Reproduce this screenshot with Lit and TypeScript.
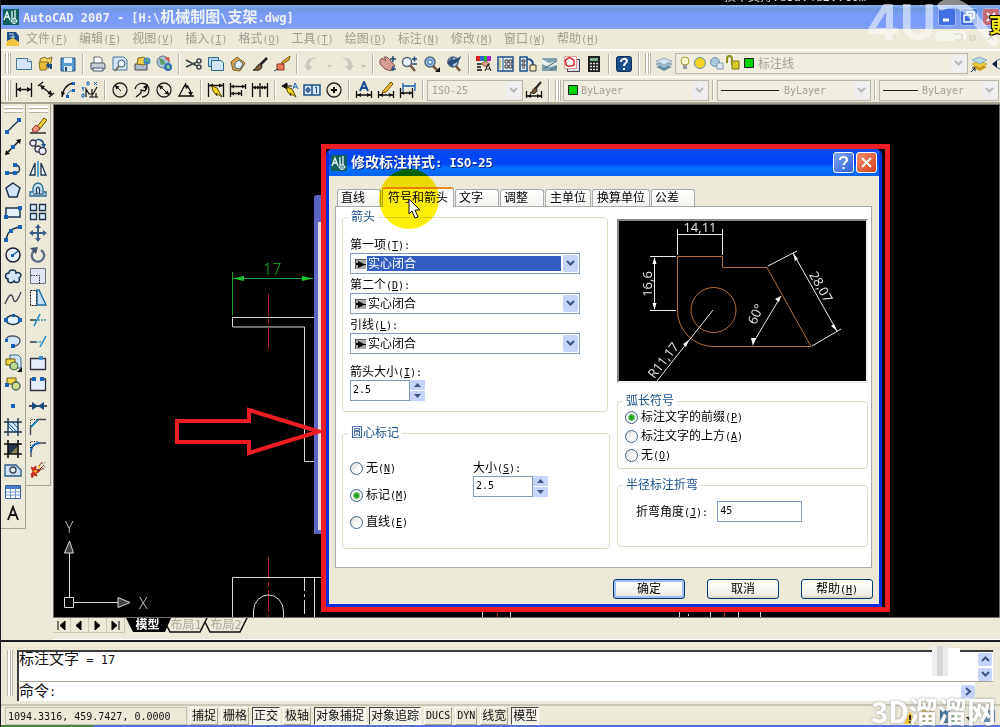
import { LitElement, html, svg, css, nothing } from "lit";
import { customElement } from "lit/decorators.js";
import { classMap } from "lit/directives/class-map.js";

const N = "#1c3550";
const B = "#1a63b4";
const P = "#d3e4f6";

/* Toolbar glyphs, drawn on an 18 x 18 grid. */
const glyphs: Record<string, unknown> = {
  new: svg`<path d="M1.500 3.500h11l4 3v8h-15z" fill=${P} stroke="#4a7899"/><path d="M12.500 3.500v3h4" fill="#fff" stroke="#4a7899"/>`,
  open: svg`<path d="M3 4l5-2 2 2 5-2-2 10-9 3z" fill="#f3d35c" stroke="#7a6a20"/><path d="M2 7h9l-2 8H3z" fill="#e6b93a" stroke="#8a7420"/><path d="M9 10l3-3v2h3v5h-2v-2h-1v2z" fill="#1d4f86"/>`,
  save: svg`<path d="M2 3h14v13H2z" fill="#5b97cf" stroke="#27557f"/><path d="M5 3h8v5H5z" fill="#eaf3fb"/><path d="M5 11h8v5H5z" fill="#dfe6ec"/><path d="M6 12h2v4H6z" fill="#27557f"/>`,
  print: svg`<path d="M5 8V2h6l2 2v4" fill="#fff" stroke="#667"/><path d="M2 8h13l1 2v4H2z" fill="#c4ccd6" stroke="#4b5a6b"/><path d="M4 13h10v3H4z" fill="#eef" stroke="#4b5a6b"/>`,
  preview: svg`<path d="M2 2h11l3 3v10H2z" fill=${P} stroke="#4a7899"/><circle cx="10.5" cy="8.500" r="3.5" fill="#e9f6ff" stroke="#456"/><path d="M8 11l-4 5" stroke="#765" stroke-width="2"/>`,
  publish: svg`<path d="M2 9h12v6H2z" fill="#aebccb" stroke="#445"/><path d="M4 9l1-6 6-1 3 5-3 3z" fill="#f0cb4a" stroke="#866a1c"/><circle cx="14" cy="6" r="3.5" fill="#3f8cc5"/><path d="M12 5l3-1 1 3z" fill="#7cb44c"/>`,
  web: svg`<circle cx="8" cy="7" r="6" fill="#a9c4da" stroke="#678"/><path d="M4 3l5 2 1 4-4 1z" fill="#5fa06a"/><circle cx="13" cy="12" r="4" fill="#3473b8"/><path d="M9 3l5-1 1 5z" fill="#d65b4c"/><path d="M11 11l3-1 1 3-2 1z" fill="#9bd08c"/>`,
  cut: svg`<path d="M1 5l11 6M1 12l11-5" stroke="#3c4650" stroke-width="1.500"/><circle cx="14" cy="6" r="2" fill="none" stroke="#3c4650" stroke-width="1.500"/><circle cx="14" cy="12" r="2" fill="none" stroke="#3c4650" stroke-width="1.500"/>`,
  copy: svg`<path d="M1.500 2.500h10v9h-10z" fill="#b9d6ef" stroke="#2c6a92"/><path d="M4.500 5.500h9l3 2v8h-12z" fill=${P} stroke="#2c6a92"/>`,
  paste: svg`<path d="M2 7l6-5 8 6-5 8-7-1z" fill="#d7a552" stroke="#7a5a22"/><path d="M6 8l4-3 4 4-3 5-5-1z" fill="#e4eef7" stroke="#467"/>`,
  brush: svg`<path d="M16 3l-7 7" stroke="#222" stroke-width="2.500"/><path d="M10 9c-5 0-4 5-8 6 5 1 9 0 9-4z" fill="#7b5a3c" stroke="#222"/>`,
  matchp: svg`<path d="M17 1l-8 6-1 3 8-5z" fill="#e9b52a" stroke="#75560b"/><path d="M4 9h7v6H4z" fill="#e8795a" stroke="#8f3117"/><path d="M1 16l4-2" stroke="#246"/>`,
  undo: svg`<path d="M3 10c0-6 5-8 11-7-6 1-8 4-7 8l3 0-5 5-4-6z" fill="#c9c9c0"/>`,
  redo: svg`<path d="M15 10c0-6-5-8-11-7 6 1 8 4 7 8l-3 0 5 5 4-6z" fill="#c9c9c0"/>`,
  pan: svg`<path d="M1 5l2-2 4 3-2-4 3 0 4 4 4 5-4 5-6-2-5-5z" fill="#d59c92" stroke="#7c5750"/><path d="M14 1v6M11 4h6M14 11v5M12 14h5" stroke="#1e4d7a" stroke-width="1.500"/>`,
  zoompm: svg`<circle cx="6" cy="7" r="4.500" fill="#eef7ff" stroke="#567" stroke-width="1.500"/><path d="M9 10l5 6" stroke="#754" stroke-width="2.500"/><path d="M11 4h5M13.500 1.500v5M11 9h5" stroke="#1e4d7a" stroke-width="1.500"/>`,
  zoomw: svg`<circle cx="7" cy="7" r="5" fill="#9fc8ea" stroke="#567" stroke-width="1.500"/><path d="M5 5h4v4H5z" fill="#fff" stroke=${B}/><path d="M10 11l4 4" stroke="#754" stroke-width="2.500"/><path d="M17 12v5h-5z"/>`,
  zoomp: svg`<circle cx="8" cy="7" r="5" fill="#a8cdee" stroke="#567" stroke-width="1.500"/><path d="M11 11l4 5" stroke="#754" stroke-width="2.500"/><path d="M2 8l6-6v3c4-1 6-3 8-4-1 5-4 7-8 8v3z" fill="#2a4c76"/>`,
  props: svg`<path d="M1 1h4v5H1z" fill="#d22"/><path d="M5 1h4v5H5z" fill="#36c"/><path d="M9 1h3v5H9z" fill="#2b2"/><path d="M12 1h4v5h-4z" fill="#a2c"/><path d="M2 9h5M2 12h4M2 15h5" stroke="#444" stroke-width="2"/><path d="M6 9l5-3 4 3-3 3z" fill="#dba58f" stroke="#754"/><path d="M10 16l3-7 3 7M11 14h4" stroke="#222" fill="none"/>`,
  dc: svg`<path d="M1 2h15v14H1z" fill="#e9f2fb" stroke="#1d4f86" stroke-width="1.500"/><path d="M6 2v14" stroke="#1d4f86"/><path d="M3 4v10" stroke="#cc8" stroke-width="2"/><path d="M8 5h3v3H8zM12 5h3v3h-3zM8 10h3v3H8zM12 10h3v3h-3z" fill="none" stroke="#333"/>`,
  tp: svg`<path d="M1 2h7v14H1z" fill="#dbe9f7" stroke="#1d4f86" stroke-width="1.500"/><path d="M3 5h3v2H3zM3 9h3v2H3zM3 13h3" stroke="#333" fill="none"/><path d="M8 4c4 0 6 2 6 6" fill="none" stroke="#1d4f86" stroke-width="2"/><path d="M11 10h6v6h-6z" fill="#f4e8bc" stroke="#333"/>`,
  sheet: svg`<path d="M1 3h15v13H1z" fill="#7fa0ae"/><path d="M1 4l7 4 8-2v4l-8 2-7-3z" fill="#e8efef"/><path d="M4 13l12-7M9 15l7-3" stroke="#466"/>`,
  markup: svg`<path d="M4.500 4.500h12v12h-12z" fill="#dde" stroke="#445"/><path d="M1.500 1.500h12v12h-12z" fill="#fff" stroke="#d99"/><path d="M4 4c3-3 4 0 5 0 3 1 2 2 2 4 1 3-2 3-4 3-2 1-5-1-4-3-1-2-1-3 1-4z" fill="none" stroke="#d22" stroke-width="1.500"/>`,
  calc: svg`<path d="M3 1h12v16H3z" fill="#222"/><path d="M5 3h8v3H5z" fill="#7fb58b"/><path d="M5 8.500h8M5 11.500h8M5 14.500h8" stroke="#ddd" stroke-width="1.500" stroke-dasharray="2 1"/>`,
  help: svg`<rect x="1.500" y="1.500" width="15" height="15" rx="2" fill="#17508c" stroke="#0c2f57"/><path d="M6 7c0-4 6-4 6-1 0 2-3 2-3 5M9 13v2" fill="none" stroke="#fff" stroke-width="2"/>`,
  layers: svg`<path d="M1 12l8 4 8-4-8-3z" fill="#6c8ca6"/><path d="M1 9l8 4 8-4-8-3z" fill="#9fbdd2" stroke="#5b7c93" stroke-width=".5"/><path d="M1 6l8 4 8-4-8-3z" fill="#cfe2ee" stroke="#5b7c93" stroke-width=".5"/>`,
  layerp: svg`<path d="M2 12l8 4 7-4-8-3z" fill="#c99b17"/><path d="M2 9l8 4 7-4-8-3z" fill="#f1cf3c" stroke="#8c7414" stroke-width=".5"/><path d="M2 5l8 4 7-4-8-3z" fill="#b9d8ea" stroke="#4b7c93" stroke-width=".5"/><path d="M1 17l4-4M2 13h3v3" stroke="#124" fill="none"/>`,
  linear: svg`<path d="M1.500 2v14M16.500 2v14M2 8.500h14" stroke="#111" stroke-width="1.300"/><path d="M2 8.500l4-2.500v5zM16 8.500l-4-2.500v5z"/>`,
  aligned: svg`<path d="M4 5l11 9M1 5l5-4M12 16l5-4" stroke="#111" stroke-width="1.300"/><path d="M3 4l5 1-3 4zM15.500 14l-5-1 3-4z"/>`,
  arclen: svg`<path d="M3 16C4 8 8 3 15 2" fill="none" stroke="#111" stroke-width="1.300"/><path d="M8 16c0-4 2-6 7-7" fill="none" stroke=${B}/><path d="M3 16l-1-6 4 2z"/><path d="M13 1h3v3h-3zM13 8h3v3h-3zM7 14h3v3H7z" fill=${B}/>`,
  ordinate: svg`<path d="M5 16V8l3 5h4l4-7M8 16h9M15 16v-4M11 16V8" fill="none" stroke="#111" stroke-width="1.200"/><path d="M1 6l1 2 1-2M2 8v2M1 13h2v3H1zM6 1h2v3H6zM13 1l3 3M16 1l-3 3" fill="none" stroke=${B}/>`,
  radius: svg`<circle cx="9" cy="9" r="7" fill="none" stroke="#222" stroke-width="1.300"/><path d="M10 10L5 5" stroke="#111"/><path d="M3.500 4l5 1.500-3 3z"/>`,
  jogged: svg`<path d="M2 8C4 0 17 1 16 9c0 4-3 7-7 7" fill="none" stroke="#222" stroke-width="1.300"/><path d="M3 16l5-4 0-3 4 1 2-5" fill="none" stroke="#111" stroke-width="1.300"/><path d="M15 3l-1 6-4-3z"/>`,
  diameter: svg`<circle cx="9" cy="9" r="7" fill="none" stroke="#222" stroke-width="1.300"/><path d="M5 5l8 8" stroke="#111"/><path d="M3.500 4l5 1.500-3 3zM14.500 14l-5-1.500 3-3z"/>`,
  angular: svg`<path d="M9 2L2 15h15" fill="none" stroke="#111" stroke-width="1.300"/><path d="M8 5c4 1 6 4 6 9" fill="none" stroke="#111" stroke-width="1.300"/><path d="M8 3l4 2-3 3zM14 15l-3-4h5z"/>`,
  qdim: svg`<path d="M1.500 2v14M16.500 2v14M2 4.500h14" stroke="#111" stroke-width="1.300"/><path d="M2 4.500l4-2v4zM16 4.500l-4-2v4z"/><path d="M5 5l5 2 5 9-6-4 1 3-4-5z" fill="#f0d31c" stroke="#5a4c00"/>`,
  baseline: svg`<path d="M1.500 2v14M16.500 3v5M12.500 9v6M2 5.500h14M2 12.500h10" stroke="#111" stroke-width="1.300"/><path d="M2 5.500l3-2v4zM16 5.500l-3-2v4zM2 12.500l3-2v4zM12 12.500l-3-2v4z"/>`,
  continue: svg`<path d="M1.500 2v14M9 2v14M16.500 2v14M2 6.500h14" stroke="#111" stroke-width="1.300"/><path d="M2 6.500l3-2v4zM9 6.500l-3-2v4zM9 6.500l3-2v4zM16 6.500l-3-2v4z"/>`,
  leader: svg`<path d="M1 5l5-3v6zM5 5h6" stroke="#111"/><path d="M6 6l5 2 4 8-6-4 1 3-4-5z" fill="#f0d31c" stroke="#5a4c00"/><path d="M12 8l2-6 3 6M13 6h3" fill="none" stroke=${B}/>`,
  tol: svg`<path d="M1 4h16v10H1zM9 4v10" fill="#d8e8f8" stroke="#1d4f86" stroke-width="1.500"/><circle cx="5" cy="9" r="2" fill="none" stroke="#1d4f86"/><path d="M2.500 9h5M5 6v6M12 7l1.500-1v6" fill="none" stroke="#1d4f86"/>`,
  center: svg`<circle cx="9" cy="9" r="7" fill="none" stroke="#222" stroke-width="1.300"/><path d="M9 6v6M6 9h6" stroke="#111" stroke-width="2"/>`,
  dimedit: svg`<path d="M5 10l4-9 4 9M6 7h6" fill="none" stroke="#1a4f90" stroke-width="2"/><path d="M1.500 10v7M16.500 10v7M2 14h14" stroke="#111" stroke-width="1.300"/><path d="M2 14l4-2v4zM16 14l-4-2v4z"/>`,
  dimtedit: svg`<path d="M6 10l8-9 2 2-7 8-4 1z" fill="#f0c22c" stroke="#76500b"/><path d="M1.500 10v7M16.500 10v7M2 14h14" stroke="#111" stroke-width="1.300"/><path d="M2 14l4-2v4zM16 14l-4-2v4z"/>`,
  dimupd: svg`<path d="M4 2v8M16 2v8M4 5h12" stroke="#1a63b4" stroke-width="1.300"/><path d="M1.500 7v10M13.500 7v10M2 12h12" stroke="#111" stroke-width="1.300"/><path d="M2 12l3-2v4zM13 12l-3-2v4z"/>`,
  dimstyle: svg`<path d="M16 1l-6 7" stroke="#222" stroke-width="2"/><path d="M11 7c-4 0-3 4-6 5 4 1 7 0 7-3z" fill="#7b5a3c" stroke="#222"/><path d="M1.500 10v7M16.500 10v7M2 15h14" stroke="#111" stroke-width="1.300"/><path d="M2 15l4-2v4zM16 15l-4-2v4z"/>`,
  line: svg`<path d="M3 15L15 3" stroke=${N} stroke-width="1.400"/><path d="M1 13h4v4H1zM13 1h4v4h-4z" fill=${B}/>`,
  xline: svg`<path d="M2 16L16 2" stroke="#111" stroke-width="1.400"/><path d="M1 17l1-5 4 4zM17 1l-5 1 4 4z"/><path d="M7 7h4v4H7z" fill=${B}/>`,
  pline: svg`<path d="M3 13h8c6 0 6-8 0-8" fill="none" stroke=${N} stroke-width="1.400"/><path d="M1 11h4v4H1zM9 11h4v4H9zM9 3h4v4H9z" fill=${B}/>`,
  polygon: svg`<path d="M9 2l7 5-3 9H5L2 7z" fill=${P} stroke=${N} stroke-width="1.500"/>`,
  rect: svg`<path d="M2 5h14v9H2z" fill="#e6f0fa" stroke=${N} stroke-width="1.500"/><path d="M0 12h4v4H0zM14 3h4v4h-4z" fill=${B}/>`,
  arc: svg`<path d="M2 16C3 9 7 4 16 3" fill="none" stroke=${N} stroke-width="1.400"/><path d="M0 14h4v4H0zM5 5h4v4H5zM14 1h4v4h-4z" fill=${B}/>`,
  circle: svg`<circle cx="9" cy="9" r="7" fill="#e6f0fa" stroke="#223" stroke-width="1.500"/><path d="M9 9l5-4" stroke=${B} stroke-width="1.500"/><path d="M7 8h3v3H7z" fill=${B}/>`,
  cloud: svg`<path d="M5 6c0-4 7-4 7 0 4-2 7 3 3 5 2 4-3 6-5 3-2 3-7 2-6-2-4-1-3-6 1-6z" fill=${P} stroke=${N} stroke-width="1.500"/>`,
  spline: svg`<path d="M1 15C6 3 8 5 9 9s3 7 8-6" fill="none" stroke="#445" stroke-width="1.400"/>`,
  ellipse: svg`<ellipse cx="9" cy="9" rx="7" ry="4.500" fill="#e6f0fa" stroke=${N} stroke-width="1.500"/><path d="M0 7h4v4H0zM14 7h4v4h-4zM8 3h3v3H8z" fill=${B}/>`,
  earc: svg`<path d="M2 8C3 2 16 3 16 9c0 3-3 5-7 5" fill=${P} stroke="#556" stroke-width="1.500"/><path d="M1 7h3v3H1zM7 12h4v4H7z" fill=${B}/>`,
  insblk: svg`<path d="M6 1h8l3 3v10H6z" fill="#d3e4f6" stroke="#3b6b92"/><path d="M2 5h9v6H2z" fill="#f1d64a" stroke="#645609"/><circle cx="10" cy="12" r="4" fill="#bcd68a" stroke="#465"/><path d="M18 13v5h-5z"/>`,
  mkblk: svg`<path d="M3 3h9v6H3z" fill="#f1d64a" stroke="#645609"/><circle cx="12" cy="11" r="4" fill="#cbdc8c" stroke="#465" stroke-width="1.300"/><path d="M1 8h4v4H1z" fill=${B}/>`,
  point: svg`<path d="M7 7h4v4H7z" fill=${B}/>`,
  hatch: svg`<path d="M4 4h10v10H4z" fill=${P}/><path d="M4 8l6 6M4 5l9 9M8 4l6 6M12 4l2 2" stroke=${B}/><path d="M4 0v18M14 0v18M0 4h18M0 14h18" stroke=${N} stroke-width="1.400"/>`,
  grad: svg`<path d="M4 4h10v10H4z" fill="#25384e"/><path d="M6 14l8-8v8z" fill="#8b8554"/><path d="M4 0v18M14 0v18M0 4h18M0 14h18" stroke="#111" stroke-width="1.600"/>`,
  region: svg`<path d="M1 4h11l5 5v6H1z" fill="#cfe0f0" stroke="#2b5c88" stroke-width="1.300"/><circle cx="9" cy="9" r="3" fill="#eee" stroke="#345" stroke-width="1.300"/>`,
  table: svg`<path d="M1.500 2.500h15v13h-15z" fill="#fff" stroke="#345f9c"/><path d="M2 3h14v3H2z" fill="#4d7fc4"/><path d="M2 9h14M2 12h14M6.500 6v9M11.500 6v9" stroke="#6c94cf"/>`,
  mtext: svg`<path d="M4 16L9 3l5 13M6 11h6" fill="none" stroke="#111" stroke-width="1.800"/>`,
  erase: svg`<path d="M1 16h16" stroke="#111" stroke-width="1.300"/><path d="M15 1l3 2-8 10-4 1 1-3z" fill="#f1cf3c" stroke="#6b5108"/><path d="M3 12l4-4 4 3-3 4H4z" fill="#ef8f7d" stroke="#8c3b2c"/>`,
  copyo: svg`<circle cx="4" cy="5" r="3" fill="#eef" stroke="#334" stroke-width="1.300"/><circle cx="9" cy="11" r="3" fill="#eef" stroke="#334" stroke-width="1.300"/><circle cx="13.500" cy="13" r="3.500" fill="#eef" stroke="#334" stroke-width="1.300"/><path d="M6 3c4-3 8-1 9 4" fill="none" stroke="#1d4f86" stroke-width="1.500"/><path d="M12 6h5l-2 4z" fill="#1d4f86"/>`,
  mirror: svg`<path d="M6 3v12H1zM12 3v12h5z" fill="#fff" stroke=${N} stroke-width="1.300"/><path d="M9 1v16" stroke="#1a88c4" stroke-width="1.400"/>`,
  offset: svg`<path d="M1 15v-4h3c-2-12 12-12 10 0h3v4z" fill="#c2ddf1" stroke="#2b6a8e" stroke-width="1.300"/><path d="M4 13h4c-3-9 5-9 2 0h5" fill="none" stroke=${N} stroke-width="1.200"/>`,
  array: svg`<path d="M1.500 1.500h6v6h-6zM10.500 1.500h6v6h-6zM1.500 10.500h6v6h-6zM10.500 10.500h6v6h-6z" fill="#dce9f6" stroke=${N} stroke-width="1.300"/>`,
  move: svg`<path d="M9 3v12M3 9h12" stroke="#3b5f86" stroke-width="2"/><path d="M9 0l3 4H6zM9 18l3-4H6zM0 9l4-3v6zM18 9l-4-3v6z" fill="#3b5f86"/>`,
  rotate: svg`<path d="M12 4c7 5 1 14-6 11-4-2-4-8-1-10" fill="none" stroke="#5c6f86" stroke-width="2.400"/><path d="M1 2l8-1-2 7z" fill="#44566c"/>`,
  scale: svg`<path d="M1.500 1.500h15v15h-15z" fill="#dfe4ee" stroke="#6a7487"/><path d="M2 8.500h8.500v8" fill="none" stroke="#223" stroke-dasharray="1.500 1"/>`,
  stretch: svg`<path d="M8 1h2l7 15H8z" fill="#c8dff1" stroke="#1a6fa4" stroke-width="1.400"/><path d="M1.500 1.500h6v15h-6z" fill="#fff" stroke="#111" stroke-dasharray="2 1"/>`,
  trim: svg`<path d="M1 9h6" stroke="#234" stroke-width="1.400"/><path d="M9 9h8" stroke="#49a" stroke-dasharray="2 1" stroke-width="1.400"/><path d="M5 15l6-12" stroke="#1a88c4" stroke-width="1.500"/>`,
  extend: svg`<path d="M1 10h6" stroke="#234" stroke-width="1.400"/><path d="M7 10h5" stroke="#49a" stroke-dasharray="2 1" stroke-width="1.400"/><path d="M11 15l6-11" stroke="#1a88c4" stroke-width="1.500"/>`,
  breakp: svg`<path d="M1.500 4.500h15v11h-15z" fill="#e4edf8" stroke="#334" stroke-width="1.300"/><path d="M10 2h4v4h-4z" fill="#3f8cd0"/>`,
  break: svg`<path d="M5 4H1.500v11.500h15V4H13" fill="#e4edf8" stroke="#334" stroke-width="1.300"/><path d="M3 2h4v4H3zM11 2h4v4h-4z" fill=${B}/>`,
  join: svg`<path d="M0 9h18" stroke="#123" stroke-width="1.500"/><path d="M3 5l6 4-6 4zM15 5L9 9l6 4z" fill="#1c4d7e"/>`,
  chamfer: svg`<path d="M1.500 17V9L9 1.500h8" fill="none" stroke="#445" stroke-width="1.400"/><path d="M2 9l7-7" stroke="#1a88c4" stroke-width="1.800"/><path d="M1.500 8V1.500h7" fill="none" stroke="#111" stroke-dasharray="1 1.500"/>`,
  fillet: svg`<path d="M2 17v-5C2 6 6 3 11 3h6" fill="none" stroke="#445" stroke-width="1.400"/><path d="M2 12C2 6 6 3 11 3" fill="none" stroke=${B} stroke-width="2"/><path d="M1.500 8V1.500h7" fill="none" stroke="#111" stroke-dasharray="1 1.500"/>`,
  explode: svg`<path d="M2 6l2 1 3-2 0 4 4-1-1 3-3 1 1 3-3-1-2 3-1-4 2-2z" fill="#d33422" stroke="#a81a08" stroke-width=".7"/><path d="M4 10l4-1-1 3zM8 6l3-2 0 3z" fill="#ffc81c"/><path d="M9 10l6-6M11 9l4-2M10 5l3-4" stroke="#8a2a1a"/><path d="M13 3l4-2M15 6l2-1" stroke="#567" stroke-dasharray="1 1"/>`,
};

const icon = (n: string) => html`<svg class="ic" viewBox="0 0 18 18" fill="#111" stroke="none" aria-hidden="true">${glyphs[n]}</svg>`;
const tool = (n: string) => {
  if (n === "|") return html`<span class="sep"></span>`;
  if (n === "v") return html`<button class="drop" aria-label="list"><svg width="5" height="3"><path d="M0 0h5L2.500 3z" fill="#c4c4ba" /></svg></button>`;
  return html`<button class="tool" aria-label=${n}>${icon(n)}</button>`;
};
const key = (text: string, k: string, tail = "") => html`${text}<span class="lat">(<u>${k}</u>)${tail}</span>`;
const chevron = svg`<path d="M1 1l3.500 3.500L8 1" fill="none" stroke="currentColor" stroke-width="2" />`;
const chev = (cls: string) => html`<span class=${cls} aria-hidden="true"><svg width="9" height="7">${chevron}</svg></span>`;
const logo = html`<svg class="logo" viewBox="0 0 16 16" aria-hidden="true"><path d="M0 0h16v16H0z" fill="#12605e" /><path d="M1 11L4 3l3 8M2 8h4M9 2v8M12 1v9" fill="none" stroke="#e7fbf4" stroke-width="1.300" /><circle cx="11" cy="12" r="2.500" fill="none" stroke="#e7fbf4" /><path d="M7 12h8M11 9v6" stroke="#e7fbf4" stroke-width=".7" /></svg>`;

const shared = css`
  *, *::before { box-sizing: border-box; }
  button, input, select { font: inherit; color: inherit; margin: 0; padding: 0; border-radius: 0; }
  button { background: none; border: 0; white-space: nowrap; }
  .lat { font-size: 10px; }
  .logo { width: 16px; height: 16px; flex: none; display: block; }
`;

@customElement("cad-preview")
class CadPreview extends LitElement {
  static styles = css`
    :host { display: block; height: 164px; border: 2px solid #8b868c; border-right-color: #efeef2; border-bottom-color: #efeef2; background: #000; }
    svg { display: block; width: 100%; height: 100%; }
    text { font: 400 13px "Open Sans", sans-serif; fill: #e8e8e8; text-anchor: middle; }
  `;
  render() {
    return html`<svg role="img" aria-label="preview"><g transform="translate(-619 -221)" fill="none">
      <path d="M677.500 310V256.500h45V267.500h44.500L811 346.500H713.500A36 36 0 0 1 677.500 310" stroke="#b4713c" />
      <circle cx="713.500" cy="310" r="22.500" stroke="#b4713c" />
      <path d="M677.500 229v26M722.500 229v26M678 234.500h44M650 256.500h26M650 310.500h26M654.500 258v51M768 266l29-15M812 346l29-17M793 253l44 78M713 310l-56 71M753 343L781 296" stroke="#eee" />
      <path d="M654.500 257l-2 7h4zM654.500 310l-2-7h4zM793 253l2 8 3-2zM837 331l-6-5 3-2zM689 340l-6 4 3 3zM753 346l-2-8h5zM781 296l-6 3 4 3z" fill="#fff" />
      <text x="700" y="232">14,11</text>
      <text transform="translate(652 284) rotate(-90)">16,6</text>
      <text transform="translate(817 289) rotate(60)">28,07</text>
      <text transform="translate(760 316) rotate(-66)">60°</text>
      <text transform="translate(667 363) rotate(-52)">R11,17</text>
    </g></svg>`;
  }
}

@customElement("dim-dialog")
class DimDialog extends LitElement {
  static styles = [shared, css`
    :host { display: block; position: relative; color: #000; }
    .win { background: #ece9d8; border: 3px solid #0831d9; border-top: 0; border-radius: 6px 6px 0 0; overflow: hidden; }
    .cap { display: flex; align-items: center; height: 27px; margin: 0 -3px; padding: 0 5px; gap: 4px; color: #fff; font-weight: 700; background: linear-gradient(#0a4de8, #0246f5 30%, #0246f5 55%, #0572ff 70%, #0462f2); }
    .cap .lat { font-size: 12px; }
    .cap h1 { flex: 1; margin: 0; font-size: 14px; line-height: 20px; text-shadow: 1px 1px #0a2a86; }
    .cb { width: 21px; height: 21px; border: 1px solid #fff; border-radius: 3px; background: linear-gradient(135deg, #7fa9f5, #2a5fd8); display: grid; place-items: center; }
    .cb + .cb { margin-left: -2px; }
    .cb.x { background: linear-gradient(135deg, #f0906c, #d8401a); }
    .main { padding: 11px 7px 5px 6px; }
    .tabs { display: flex; align-items: flex-end; height: 19px; padding-left: 2px; gap: 1px; }
    .tabs button { height: 17px; line-height: 15px; padding: 0 7px 0 3px; min-width: 44px; text-align: left; background: linear-gradient(#fff, #f4f3ee); border: 1px solid #a5acb2; border-bottom: 0; border-radius: 3px 3px 0 0; }
    .tabs .wide { padding: 0 4px; }
    .tabs .on { height: 20px; margin-bottom: -1px; padding: 0 5px; border-top: 2px solid #e68b2c; background: #fcfcfe; position: relative; }
    .panel { border: 1px solid #a5acb2; background: #fff; padding: 2px 3px 18px 6px; display: grid; grid-template-columns: 268fr 251fr; gap: 7px; }
    .col { display: flex; flex-direction: column; }
    cad-preview { margin-top: 10px; }
    fieldset { margin: 0; padding: 0 7px; border: 1px solid #dcdcc4; border-radius: 4px; min-width: 0; }
    legend { color: #1b4f8a; line-height: 16px; padding: 0 3px; margin-left: -2px; }
    label { line-height: 16px; height: 16px; display: block; }
    .a { height: 203px; margin-right: 2px; padding-top: 12px; }
    .b { height: 124px; margin-top: 13px; padding-top: 19px; display: flex; }
    .c { height: 76px; margin-top: 10px; }
    .d { height: 70px; margin-top: 8px; padding-top: 8px; }
    .fields { width: 230px; display: flex; flex-direction: column; gap: 3px; }
    .combo { position: relative; height: 21px; display: block; }
    .combo select { display: block; appearance: none; width: 100%; height: 21px; padding: 0 20px 0 17px; border: 1px solid #7f9db9; background: #fff; line-height: 16px; outline: 0; }
    .combo .sel { color: #fff; background: linear-gradient(#3160c0, #3160c0) no-repeat 16px 2px / 194px 15px #fff; }
    .combo .mk { position: absolute; left: 5px; top: 6px; pointer-events: none; }
    .btn { position: absolute; right: 2px; top: 2px; width: 15px; height: 17px; background: #c6d3fb; border-radius: 2px; color: #3a5486; display: grid; place-items: center; pointer-events: none; }
    .spin { display: flex; }
    .spin input { width: 60px; }
    input[type="text"] { height: 21px; border: 1px solid #7f9db9; background: #fff; padding: 0 2px 3px 2px; font-size: 10px; min-width: 0; }
    .ud { width: 15px; display: grid; grid-template-rows: 1fr 1fr; gap: 1px; }
    .ud button { background: #c6d3fb; display: grid; place-items: center; color: #3a5486; }
    .size { margin-top: 10px; }
    .radios { display: flex; flex-direction: column; gap: 3px; }
    .radios.loose { gap: 11px; width: 123px; }
    .radios label { display: flex; align-items: center; gap: 3px; height: 16px; }
    input[type="radio"] { appearance: none; width: 13px; height: 13px; border: 1px solid #3c6488; border-radius: 50%; background: linear-gradient(135deg, #dcdcd6, #fff 70%); flex: none; }
    input[type="radio"]:checked { background: radial-gradient(circle, #23a121 0 2px, #7fc97d 3px, #f4f4f0 4px); }
    .in { display: flex; align-items: center; gap: 9px; padding-left: 11px; }
    .in input { width: 85px; }
    .foot { display: flex; justify-content: flex-end; gap: 22px; padding: 11px 0 0; margin-right: -1px; }
    .foot button { width: 72px; height: 20px; line-height: 16px; border: 1px solid #003c74; border-radius: 3px; background: linear-gradient(#fff, #f0f0ea 80%, #d6d0c5); }
    .foot .ok { box-shadow: inset 0 0 0 2px #a3bff0; }
    .halo { position: absolute; left: 53px; top: 20px; width: 60px; height: 60px; border-radius: 50%; background: #ffee08; mix-blend-mode: multiply; pointer-events: none; }
    .cur { position: absolute; left: 82px; top: 49px; pointer-events: none; }
  `];

  private combo(label: unknown, id: string, on = false) {
    return html`<div><label for=${id}>${label}</label>
      <span class="combo"><select id=${id} class=${classMap({ sel: on })}><option>实心闭合</option></select>
        <svg class="mk" width="11" height="10"><path d="M0 0h11v10H0z" fill="#a9a9a9" /><path d="M1 4h2V2l6 3h2v1H9L3 9V6H1z" /><path d="M0 10V0h11" fill="none" stroke="#111" /></svg>
        ${chev("btn")}</span></div>`;
  }
  private spin(label: unknown, id: string, cls: string) {
    return html`<div class=${cls}><label for=${id}>${label}</label>
      <div class="spin"><input id=${id} type="text" value="2.5" />
        <span class="ud"><button aria-label="up"><svg width="7" height="4"><path d="M0 4l3.500-4L7 4z" fill="currentColor" /></svg></button><button aria-label="down"><svg width="7" height="4"><path d="M0 0l3.500 4L7 0z" fill="currentColor" /></svg></button></span></div></div>`;
  }
  private radio(name: string, label: unknown, on = false) {
    return html`<label><input type="radio" name=${name} ?checked=${on} /><span>${label}</span></label>`;
  }
  render() {
    const tabs = ["直线", "符号和箭头", "文字", "调整", "主单位", "换算单位", "公差"];
    return html`<div class="win">
      <div class="cap">${logo}<h1>修改标注样式<span class="lat">: ISO-25</span></h1>
        <button class="cb" aria-label="help"><svg width="13" height="15"><path d="M3 5c0-4 7-4 7 0 0 2-3 2-3.500 5M6.500 12v2" fill="none" stroke="#fff" stroke-width="2" /></svg></button>
        <button class="cb x" aria-label="close"><svg width="13" height="13"><path d="M2 2l9 9M11 2l-9 9" stroke="#fff" stroke-width="2" /></svg></button></div>
      <div class="main">
        <div class="tabs" role="tablist">${tabs.map((t, i) => html`<button role="tab" class=${classMap({ on: i === 1, wide: i === 4 || i === 5 })}>${t}</button>`)}</div>
        <div class="panel">
          <div class="col">
            <fieldset class="a"><legend>箭头</legend>
              <div class="fields">${this.combo(key("第一项", "T", ":"), "f1", true)}${this.combo(key("第二个", "D", ":"), "f2")}${this.combo(key("引线", "L", ":"), "f3")}</div>
              ${this.spin(key("箭头大小", "I", ":"), "f4", "size")}
            </fieldset>
            <fieldset class="b"><legend>圆心标记</legend>
              <div class="radios loose">${this.radio("cm", key("无", "N"))}${this.radio("cm", key("标记", "M"), true)}${this.radio("cm", key("直线", "E"))}</div>
              ${this.spin(key("大小", "S", ":"), "f5", "")}
            </fieldset>
          </div>
          <div class="col">
            <cad-preview></cad-preview>
            <fieldset class="c"><legend>弧长符号</legend>
              <div class="radios">${this.radio("al", key("标注文字的前缀", "P"), true)}${this.radio("al", key("标注文字的上方", "A"))}${this.radio("al", key("无", "O"))}</div>
            </fieldset>
            <fieldset class="d"><legend>半径标注折弯</legend>
              <div class="in"><label for="f6">${key("折弯角度", "J", ":")}</label><input id="f6" type="text" value="45" /></div>
            </fieldset>
          </div>
        </div>
        <div class="foot"><button class="ok">确定</button><button>取消</button><button>${key("帮助", "H")}</button></div>
      </div></div>
      <div class="halo"></div>
      <svg class="cur" width="13" height="21"><path d="M1 1v15l3-3 3 7 3-1-3-7h5z" fill="#fff" stroke="#111" /></svg>`;
  }
}

@customElement("app-root")
class AppRoot extends LitElement {
  static styles = [shared, css`
    :host { display: flex; flex-direction: column; position: relative; height: 100vh; overflow: hidden; background: #ece9d8; border-left: 1px solid #1b1b22; font: 12px "DejaVu Sans Mono", "Noto Sans CJK SC", monospace; color: #111; }
    .credit { height: 5px; flex: none; background: #000; color: #ddd; overflow: hidden; display: flex; align-items: flex-end; justify-content: flex-end; padding-right: 134px; line-height: 16px; }
    .credit .lat { font-size: 12px; }
    .title { display: flex; align-items: center; flex: none; height: 24px; padding: 0 0 0 2px; gap: 4px; color: #fff; background: linear-gradient(#8db4f2, #6f97dc 15%, #7b9cfb 45%, #7b9cfb 85%, #8aa2ec); }
    .title h1 { flex: 1; margin: 0; font-size: 15px; line-height: 20px; font-weight: 700; color: #eef0f4; }
    .title .lat { font-size: 12px; }
    .wb { width: 18px; height: 18px; border: 1px solid #9db8f2; border-radius: 3px; background: #3f6fe0; display: grid; place-items: center; flex: none; }
    .wb.x { background: #c66a72; }
    .menu { display: flex; align-items: center; flex: none; height: 20px; padding: 0 0 1px 5px; gap: 11px; color: #a09f90; }
    .menu .doc { width: 14px; height: 16px; margin-right: -5px; flex: none; }
    .menu button { line-height: 16px; height: 16px; }
    .bar { display: flex; align-items: center; flex: none; height: 27px; border-top: 2px solid #fbfaf4; }
    .bar.two { height: 28px; border-bottom: 2px solid #a8a594; }
    .grip { width: 12px; height: 21px; padding-left: 4px; flex: none; }
    .grip::before { content: ""; display: block; width: 6px; height: 100%; border: 0 solid #b8b5a2; border-width: 0 1px; background: linear-gradient(90deg, #fff 2px, #b8b5a2 2px 3px, #fff 3px); }
    .tool { width: 22px; height: 20px; display: grid; place-items: center; flex: none; }
    .ic { width: 18px; height: 18px; display: block; }
    .drop { width: 12px; height: 20px; flex: none; }
    .sep { width: 2px; height: 20px; margin: 0 3px; border-left: 1px solid #b5b29f; border-right: 1px solid #fff; flex: none; }
    .end { width: 2px; height: 23px; border-left: 1px solid #b5b29f; border-right: 1px solid #fff; margin: 0 1px 0 3px; flex: none; }
    .cb { position: relative; display: flex; flex: none; height: 21px; color: #a3a195; }
    .cb select { appearance: none; width: 100%; height: 21px; border: 1px solid #b6b9b0; background: #f0eddf; opacity: 1; font-size: 10px; padding-left: 4px; }
    .cb .cv { position: absolute; right: 2px; top: 2px; width: 15px; height: 17px; background: #eeeef0; color: #b7b7b9; display: grid; place-items: center; }
    .cb .pre { position: absolute; left: 4px; top: 2px; }
    .iso { width: 96px; }
    .lay { flex: 1; } .lay select { padding-left: 82px; font-size: 12px; }
    .color { width: 146px; } .color select { padding-left: 17px; }
    .ltype { flex: 155; } .ltype select { padding-left: 66px; }
    .lw { flex: 121; margin-right: 1px; } .lw select { padding-left: 42px; }
    .work { flex: 1; display: flex; min-height: 0; }
    .side { width: 52px; flex: none; display: flex; align-items: flex-start; }
    .tcol { width: 25px; border-right: 1px solid #a8a594; border-bottom: 1px solid #a8a594; display: flex; flex-direction: column; align-items: center; padding-bottom: 4px; }
    .tcol::before { content: ""; width: 19px; height: 7px; margin: 2px 0; border: 0 solid #b8b5a2; border-width: 0 0 1px; background: linear-gradient(#fff 2px, #b8b5a2 2px 3px, #ece9d8 3px 4px, #fff 4px); }
    .tools { display: flex; flex-direction: column; }
    .tools .tool { flex: 1; }
    .t1 { height: 409px; } .t2 { height: 366px; }
    .view { flex: 1; display: flex; flex-direction: column; min-width: 0; }
    .canvas { position: relative; flex: 1; background: #000; border: 1px solid #6f6d6a; overflow: hidden; }
    .draw { position: absolute; inset: 0; width: 100%; height: 100%; }
    .draw text { font: 300 16px "Open Sans", sans-serif; }
    .frame { position: absolute; left: 267px; top: 39px; width: 569px; border: 5px solid #ee1c24; padding-right: 3px; background: #000; }
    .point { position: absolute; left: 0; top: 0; width: 300px; height: 400px; pointer-events: none; }
    .sheets { display: flex; flex: none; height: 22px; align-items: flex-start; border-bottom: 1px solid #fff; color: #aeac9e; }
    .sheets .nav { width: 18px; height: 15px; border-right: 1px solid #c9c6b4; border-bottom: 1px solid #c9c6b4; display: grid; place-items: center; }
    .sheet { position: relative; width: 40px; height: 15px; line-height: 15px; }
    .sheet svg { position: absolute; left: -3px; top: 0; width: 46px; height: 15px; z-index: 0; }
    .sheet span { position: relative; }
    .sheet.on { color: #fff; font-weight: 700; width: 37px; margin-left: 4px; }
    .cmd { flex: none; border-top: 2px solid #1b1b22; padding: 8px 7px 3px 4px; display: flex; height: 64px; }
    .cmd .grip { height: 46px; padding-left: 2px; }
    .log { flex: 1; font-size: 15px; line-height: 16px; position: relative; }
    .log .lat { font-size: 12px; }
    .out { height: 32px; background: #fff; border-top: 2px solid #3c3c3c; border-left: 2px solid #3c3c3c; border-bottom: 1px solid #a8a594; display: flex; }
    .out p { flex: 1; margin: 0; line-height: 14px; }
    .inp { height: 19px; margin-right: 18px; background: #fff; border-left: 2px solid #3c3c3c; display: flex; align-items: center; }
    .inp input { flex: 1; border: 0; outline: 0; min-width: 0; background: none; }
    .sb { width: 14px; height: 13px; border-radius: 2px; background: #c6d3fb; color: #3a5486; display: grid; place-items: center; }
    .sbs { display: grid; gap: 2px; padding: 1px; align-content: start; }
    .smudge { position: absolute; right: 33px; top: -4px; pointer-events: none; }
    .status { flex: none; height: 21px; display: flex; align-items: center; gap: 3px; padding: 0 0 0 4px; border-top: 2px solid #c9c7b6; }
    .status .xy { width: 182px; height: 18px; line-height: 17px; font-size: 10px; padding-left: 2px; border: 1px solid #c3c0ae; }
    .status button { height: 18px; line-height: 16px; padding: 0 1px; border: 1px solid #fff; border-right-color: #a8a594; border-bottom-color: #a8a594; }
    .status .dn { border-color: #444 #fff #fff #444; background: #f4f2e8; }
    .status .s { font-size: 10px; }
    .task { flex: none; height: 2px; background: linear-gradient(90deg, #3c8c3c 92px, #4a78d4 92px); }
    .wm { position: absolute; right: 0; top: 0; width: 140px; height: 60px; pointer-events: none; }
    .wm text { font: 700 50px Inter, sans-serif; fill: #fff; fill-opacity: .55; }
    .brand { position: absolute; right: 4px; bottom: 0; font: 700 29px/34px "Noto Sans CJK SC", sans-serif; color: #fff; text-shadow: 0 0 3px #999; pointer-events: none; }
    .more { position: absolute; right: -9px; top: 16px; font-size: 20px; line-height: 20px; font-weight: 700; color: #f4e21c; text-shadow: 1px 1px #000, -1px -1px #000, 1px -1px #000, -1px 1px #000; }
    .tray { position: absolute; right: 0; bottom: 2px; }
  `];

  private select(cls: string, label: string, text: string, pre: unknown = nothing) {
    return html`<span class="cb ${cls}"><select aria-label=${label} disabled><option>${text}</option></select>${pre}${chev("cv")}</span>`;
  }

  render() {
    const menus = [["文件", "F"], ["编辑", "E"], ["视图", "V"], ["插入", "I"], ["格式", "O"], ["工具", "T"], ["绘图", "D"], ["标注", "N"], ["修改", "M"], ["窗口", "W"], ["帮助", "H"]];
    const std = "new open save | print preview publish web | cut copy paste brush matchp | undo v redo v | pan zoompm zoomw zoomp | props dc tp sheet markup calc | help".split(" ");
    const dim = "linear aligned arclen ordinate | radius jogged diameter angular | qdim baseline continue | leader tol center | dimedit dimtedit dimupd |".split(" ");
    const draw = "line xline pline polygon rect arc circle cloud spline ellipse earc insblk mkblk point hatch grad region table mtext".split(" ");
    const modify = "erase copyo mirror offset array move rotate scale stretch trim extend breakp break join chamfer fillet explode".split(" ");
    const stat: [string, boolean][] = [["捕捉", false], ["栅格", false], ["正交", true], ["极轴", false], ["对象捕捉", true], ["对象追踪", true], ["DUCS", false], ["DYN", false], ["线宽", false], ["模型", true]];
    const nav = ["M2 0v9M9 0v9L4 4.500z", "M7 0v9L2 4.500z", "M3 0v9l5-4.500z", "M9 0v9M2 0v9l5-4.500z"];
    return html`
      <div class="credit"><span>技术支持<span class="lat">:usa.4u2v.com</span></span></div>
      <header class="title">${logo}<h1><span class="lat">AutoCAD 2007 - [H:\\</span>机械制图<span class="lat">\\</span>支架<span class="lat">.dwg]</span></h1>
        <button class="wb" aria-label="minimize"><svg width="10" height="10"><path d="M1 8h6" stroke="#fff" stroke-width="3" /></svg></button>
        <button class="wb" aria-label="restore"><svg width="12" height="12"><path d="M4 3V1h7v6H9M1 4h7v7H1z" fill="none" stroke="#fff" stroke-width="1.500" /></svg></button>
        <button class="wb x" aria-label="close"><svg width="10" height="10"><path d="M1 1l8 8M9 1L1 9" stroke="#fff" stroke-width="2" /></svg></button>
      </header>
      <nav class="menu"><svg class="doc" viewBox="0 0 14 16"><path d="M1 1h9l3 4v10H1z" fill="#1f4f86" /><path d="M3 3h3M7 2v5M4 6h5" stroke="#bde" /><path d="M0 15l1-5 6-3 6 4v4z" fill="#f2c640" /></svg>
        ${menus.map(([t, k]) => html`<button>${key(t, k)}</button>`)}</nav>
      <div class="bar"><span class="grip"></span>${std.map(tool)}<span class="end"></span><span class="grip"></span>${tool("layers")}
        ${this.select("lay", "layer", "标注线", html`<svg class="pre" width="76" height="17">
          <circle cx="6" cy="6" r="4" fill="#fffbd0" stroke="#a8982c" /><path d="M4 10h4v4H4z" fill="#99a" />
          <circle cx="21" cy="8" r="5.500" fill="#f6d325" stroke="#5c8cae" /><circle cx="36" cy="7" r="4.500" fill="#a9c6da" stroke="#6a93b2" /><path d="M38 8h6v6h-6z" fill="#dfe9f2" stroke="#7f9db9" />
          <path d="M48 8V4c0-4 5-4 5 0v6" fill="none" stroke="#8d8a1c" stroke-width="2" /><path d="M53 6h7v8h-7z" fill="#d5ca29" stroke="#7d7710" /><path d="M65.500 3.500h9v9h-9z" fill="#00d400" stroke="#222" /></svg>`)}
        ${tool("layerp")}<svg width="10" height="16" viewBox="0 0 10 16"><path d="M2 8l5-4v8z" fill="#124" /><path d="M6 11l4 2M6 5l4-2" stroke="#468" /></svg></div>
      <div class="bar two"><span class="grip"></span>${dim.map(tool)}${this.select("iso", "dimension style", "ISO-25")}${tool("dimstyle")}<span class="end"></span><span class="grip"></span>
        ${this.select("color", "color", "ByLayer", html`<svg class="pre" width="11" height="17"><path d="M1.500 3.500h9v9h-9z" fill="#00d400" stroke="#222" /></svg>`)}<span class="sep"></span>
        ${this.select("ltype", "linetype", "ByLayer", html`<svg class="pre" width="60" height="17"><path d="M0 8.500h58" stroke="#222" /></svg>`)}<span class="sep"></span>
        ${this.select("lw", "lineweight", "ByLayer", html`<svg class="pre" width="36" height="17"><path d="M0 8.500h35" stroke="#222" /></svg>`)}</div>
      <main class="work">
        <aside class="side"><div class="tcol"><div class="tools t1">${draw.map(tool)}</div></div><div class="tcol"><div class="tools t2">${modify.map(tool)}</div></div></aside>
        <section class="view">
          <div class="canvas">
            <svg class="draw" role="img" aria-label="drawing"><g transform="translate(-54 -105)" fill="none" stroke="#d8d8d8">
              <path d="M314 317.500H232.500v9.500H304.500V461.500H314" />
              <path d="M232.500 272v43M233 278.500h80" stroke="#17a52c" /><path d="M233 278.500l11-2.500v5zM313 278.500l-11-2.500v5z" fill="#17c52c" stroke="none" />
              <text x="263" y="275" fill="#17c52c" stroke="none">17</text>
              <path d="M268.500 294v56M268.500 557v60" stroke="#b3201d" stroke-dasharray="22 3 5 3" />
              <path d="M232.500 619V577.500H321M314.500 577v42M253.500 619v-8a14.500 15.500 0 0 1 30 0v8" /><path d="M304.500 577v42" stroke-dasharray="14 3 3 3" />
              <path d="M482.500 610v9M510.500 610v9M679.500 610v9M710.500 610v9M738.500 610v9M760.500 610v9" /><path d="M688.500 610v9" stroke-dasharray="2 2" /><path d="M497.500 610v9M724.500 610v9" stroke="#b3201d" />
              <path d="M64.500 597.500h9v10h-9zM69.500 597V541M74 602.500h56" /><path d="M69.500 541l-5 12h9zM130 602.500l-12-5v10z" fill="#444" />
              <text x="65" y="533" fill="#ccc" stroke="none">Y</text><text x="139" y="609" fill="#ccc" stroke="none">X</text>
              <path d="M314 198q0-3 3-3h6v339h-9z" fill="#5c64c4" stroke="none" /><path d="M318 222h4v308h-4z" fill="#e3dcdc" stroke="none" />
            </g></svg>
            <div class="frame"><dim-dialog></dim-dialog></div>
            <svg class="point"><path d="M123 316h72v-11l70 21.500-70 21.500v-11h-72z" fill="none" stroke="#ee1c24" stroke-width="4" /></svg>
          </div>
          <div class="sheets">${nav.map((d) => html`<button class="nav" aria-label="sheet"><svg width="11" height="9"><path d=${d} stroke="#000" /></svg></button>`)}
            <button class="sheet on"><svg viewBox="0 0 46 15" preserveAspectRatio="none"><path d="M0 0l7 14h32l6-14z" fill="#000" /></svg><span>模型</span></button>
            ${["1", "2"].map((n) => html`<button class="sheet"><svg viewBox="0 0 46 15" preserveAspectRatio="none"><path d="M2 4l5 10h30l7-14" fill="none" stroke="#111" stroke-width="1.500" /></svg><span>布局${n}</span></button>`)}
          </div>
        </section>
      </main>
      <section class="cmd"><span class="grip"></span><div class="log">
        <div class="out"><p>标注文字<span class="lat"> = 17</span></p><span class="sbs"><button class="sb" aria-label="up"><svg width="9" height="7"><path d="M1 5l3.500-3.500L8 5" fill="none" stroke="currentColor" stroke-width="2" /></svg></button><button class="sb" aria-label="down"><svg width="9" height="7">${chevron}</svg></button></span></div>
        <div class="inp"><label for="cmd">命令<span class="lat">:</span></label><input id="cmd" type="text" /><button class="sb" aria-label="right"><svg width="7" height="9"><path d="M1 1l4 3.500L1 8" fill="none" stroke="currentColor" stroke-width="2" /></svg></button></div>
        <svg class="smudge" width="28" height="34"><path d="M0 0h6v30H0z" fill="#eee" /><path d="M5 0h6v30H5z" fill="#d6d6d6" /><path d="M11 0h5v30h-5z" fill="#eaeaea" /><path d="M16 2h12v28H16z" fill="#fff" /></svg></div></section>
      <footer class="status"><span class="xy">1094.3316, 459.7427, 0.0000</span>${stat.map(([t, d]) => html`<button class=${classMap({ dn: d, s: /[A-Z]/.test(t) })}>${t}</button>`)}</footer>
      <div class="task"></div>
      <svg class="wm"><text x="6" y="40">4U</text><g fill="none" stroke="#fff" stroke-linecap="round" stroke-opacity=".55"><path d="M80 36h22" stroke-width="10" /><path d="M82 6c12-8 26 2 34 14l18 22" stroke-width="9" /></g><path d="M94 34h8v6h-8M110 36h5v4h-5zM128 34l6 6M134 34l-6 6" fill="none" stroke="#bbb7a8" stroke-opacity=".6" /></svg>
      <div class="more">更</div>
      <svg class="tray" width="100" height="19"><path d="M4 18l6-13 6 13z" fill="#f1c629" /><path d="M10 9v5M10 15v2" stroke="#222" stroke-width="2" /><path d="M22 4h12v13H22z" fill="#c9a93c" /><path d="M40 4h10v13H40z" fill="#3c6f9c" /><circle cx="54" cy="12" r="5" fill="#4caf50" /><path d="M66 11h7l-3.500 4z" fill="#111" /><path d="M84 4h11v12H84z" fill="#4a7fb4" /></svg>
      <div class="brand">3D溜溜网</div>`;
  }
}
